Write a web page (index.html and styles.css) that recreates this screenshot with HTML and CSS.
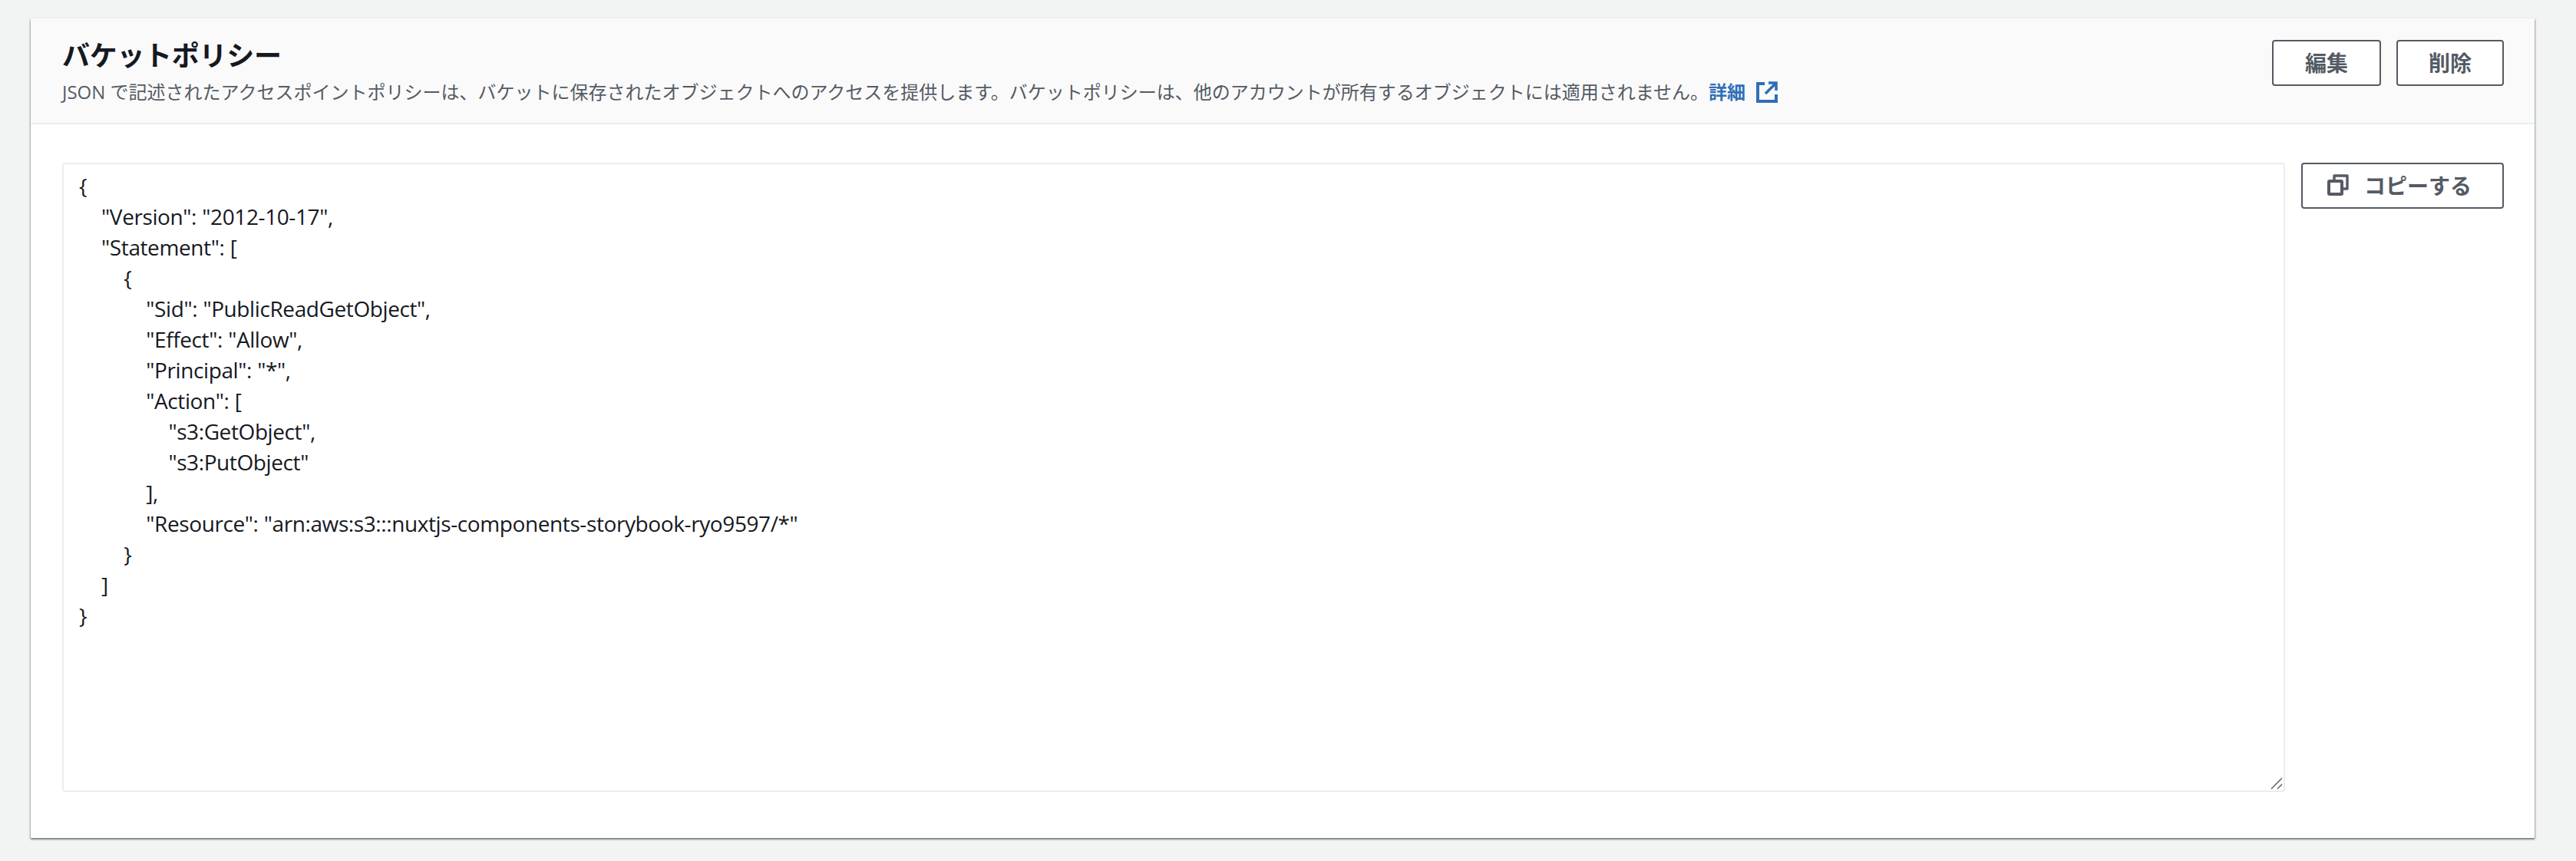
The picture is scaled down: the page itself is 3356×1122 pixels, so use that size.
FILE: index.html
```html
<!DOCTYPE html>
<html lang="ja">
<head>
<meta charset="utf-8">
<title>バケットポリシー</title>
<link rel="stylesheet" href="styles.css">
</head>
<body>
<section class="card">
  <header class="card-header">
    <div class="heading">
      <h2 class="title">バケットポリシー</h2>
      <p class="desc">JSON で記述されたアクセスポイントポリシーは、バケットに保存されたオブジェクトへのアクセスを提供します。バケットポリシーは、他のアカウントが所有するオブジェクトには適用されません。<a class="link" href="#">詳細<svg class="ext-icon" viewBox="0 0 28 28" aria-hidden="true"><path d="M11 3H2v23h24v-9" fill="none" stroke="currentColor" stroke-width="4"/><path d="M16 2h10v10M26 2 12 16" fill="none" stroke="currentColor" stroke-width="3.6"/></svg></a></p>
    </div>
    <div class="actions">
      <button class="btn btn-edit">編集</button>
      <button class="btn btn-del">削除</button>
    </div>
  </header>
  <div class="card-body">
    <div class="editor">
<pre class="code">{
    "Version": "2012-10-17",
    "Statement": [
        {
            "Sid": "PublicReadGetObject",
            "Effect": "Allow",
            "Principal": "*",
            "Action": [
                "s3:GetObject",
                "s3:PutObject"
            ],
            "Resource": "arn:aws:s3:::nuxtjs-components-storybook-ryo9597/*"
        }
    ]
}</pre>
      <svg class="grip" viewBox="0 0 16 16" aria-hidden="true"><path d="M1 15 15 1M9 15l6-6" stroke="#6b6b6b" stroke-width="1.6" fill="none"/></svg>
    </div>
    <button class="btn btn-copy"><svg class="copy-icon" viewBox="0 0 28 28" aria-hidden="true"><path d="M9 8V2h17v17h-7" fill="none" stroke="currentColor" stroke-width="3.4" stroke-linejoin="round"/><rect x="2" y="9" width="17" height="17" rx="1" fill="none" stroke="currentColor" stroke-width="4"/></svg>コピーする</button>
  </div>
</section>
</body>
</html>
```
FILE: styles.css
```css
* { box-sizing: border-box; }
html, body { height: 100%; }
body {
  margin: 0;
  padding: 24px 54px 30px 40px;
  background: #f2f3f3;
  font-family: "Open Sans", "Noto Sans CJK JP", sans-serif;
  color: #16191f;
}
.card {
  height: 1068px;
  background: #fff;
  box-shadow: 0 2px 2px rgba(84,91,100,.6), 1px 1px 2px rgba(84,91,100,.35), -1px 1px 2px rgba(84,91,100,.3);
  display: flex;
  flex-direction: column;
}
.card-header {
  height: 138px;
  flex: none;
  background: #fafafa;
  border-bottom: 2px solid #eaeded;
  padding: 24px 40px 0 41px;
  display: flex;
  justify-content: space-between;
}
.title {
  margin: 0;
  font-size: 36px;
  line-height: 44px;
  font-weight: 700;
  letter-spacing: -0.3px;
  font-family: "Noto Sans CJK JP", sans-serif;
}
.desc {
  margin: 10px 0 0;
  font-size: 24px;
  line-height: 36px;
  color: #545b64;
  font-family: "Open Sans", "Noto Sans CJK JP", sans-serif;
}
.link {
  color: #2f6fb7;
  font-weight: 700;
  text-decoration: none;
}
.ext-icon {
  width: 28px;
  height: 28px;
  margin-left: 14px;
  vertical-align: -5px;
}
.actions {
  display: flex;
  gap: 20px;
  padding-top: 4px;
  height: 64px;
}
.btn {
  height: 60px;
  background: #fff;
  border: 2px solid #545b64;
  border-radius: 4px;
  color: #545b64;
  font-family: "Noto Sans CJK JP", sans-serif;
  font-size: 28px;
  font-weight: 700;
  line-height: 1;
  padding: 0 0 2px;
}
.btn-edit { width: 142px; }
.btn-del { width: 140px; }
.card-body {
  flex: 1;
  padding: 50px 40px 60px 41px;
  display: flex;
  gap: 21px;
  align-items: flex-start;
}
.editor {
  position: relative;
  flex: 1;
  height: 820px;
  border: 2px solid #eaeded;
  border-radius: 4px;
  padding: 8px 20px;
}
.code {
  margin: 0;
  font-family: "Open Sans", sans-serif;
  font-size: 28px;
  line-height: 40px;
  letter-spacing: -0.4px;
  word-spacing: 0.4px;
  color: #16191f;
}
.grip {
  position: absolute;
  right: 1px;
  bottom: 1px;
  width: 16px;
  height: 16px;
}
.btn-copy {
  flex: none;
  width: 264px;
  display: flex;
  align-items: center;
  justify-content: center;
  gap: 20px;
  padding: 0 8px 2px 0;
}
.copy-icon { width: 28px; height: 28px; }
```
